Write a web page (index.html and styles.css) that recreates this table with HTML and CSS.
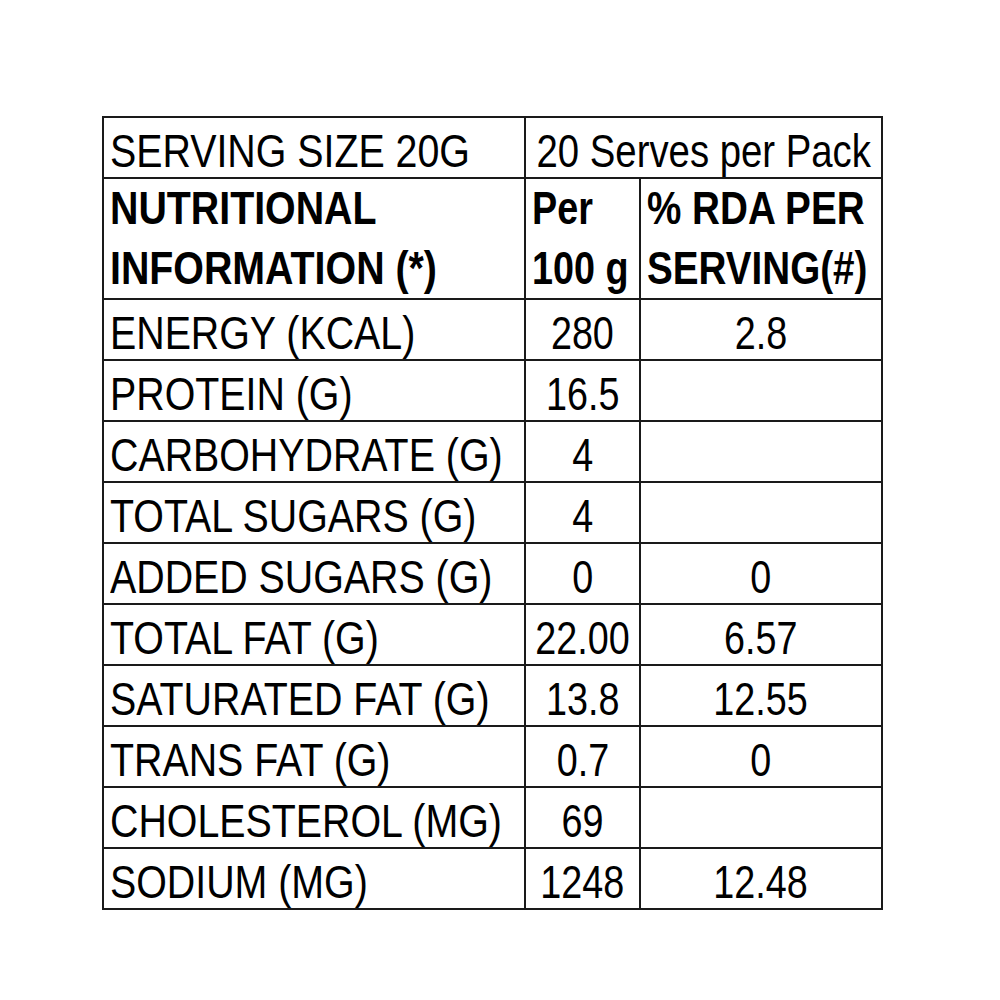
FILE: index.html
```html
<!DOCTYPE html>
<html lang="en">
<head>
<meta charset="utf-8">
<title>Nutritional Information</title>
<link rel="stylesheet" href="styles.css">
</head>
<body>
<div class="page">
  <table class="facts">
    <colgroup>
      <col class="c-name">
      <col class="c-per">
      <col class="c-rda">
    </colgroup>
    <tbody>
      <tr class="row">
        <td class="name"><span class="t">SERVING SIZE 20G</span></td>
        <td colspan="2"><div class="mid"><span class="t serves">20 Serves per Pack</span></div></td>
      </tr>
      <tr class="head">
        <td class="name"><span class="t bold">NUTRITIONAL<br>INFORMATION (*)</span></td>
        <td><span class="t bold num">Per<br>100 g</span></td>
        <td><span class="t bold rda">% RDA PER<br>SERVING(#)</span></td>
      </tr>
      <tr class="row"><td class="name"><span class="t">ENERGY (KCAL)</span></td><td><div class="mid"><span class="t num">280</span></div></td><td><div class="mid"><span class="t num">2.8</span></div></td></tr>
      <tr class="row"><td class="name"><span class="t">PROTEIN (G)</span></td><td><div class="mid"><span class="t num">16.5</span></div></td><td></td></tr>
      <tr class="row"><td class="name"><span class="t">CARBOHYDRATE (G)</span></td><td><div class="mid"><span class="t num">4</span></div></td><td></td></tr>
      <tr class="row"><td class="name"><span class="t">TOTAL SUGARS (G)</span></td><td><div class="mid"><span class="t num">4</span></div></td><td></td></tr>
      <tr class="row"><td class="name"><span class="t">ADDED SUGARS (G)</span></td><td><div class="mid"><span class="t num">0</span></div></td><td><div class="mid"><span class="t num">0</span></div></td></tr>
      <tr class="row"><td class="name"><span class="t">TOTAL FAT (G)</span></td><td><div class="mid"><span class="t num">22.00</span></div></td><td><div class="mid"><span class="t num">6.57</span></div></td></tr>
      <tr class="row"><td class="name"><span class="t">SATURATED FAT (G)</span></td><td><div class="mid"><span class="t num">13.8</span></div></td><td><div class="mid"><span class="t num">12.55</span></div></td></tr>
      <tr class="row"><td class="name"><span class="t">TRANS FAT (G)</span></td><td><div class="mid"><span class="t num">0.7</span></div></td><td><div class="mid"><span class="t num">0</span></div></td></tr>
      <tr class="row"><td class="name"><span class="t">CHOLESTEROL (MG)</span></td><td><div class="mid"><span class="t num">69</span></div></td><td></td></tr>
      <tr class="row"><td class="name"><span class="t">SODIUM (MG)</span></td><td><div class="mid"><span class="t num">1248</span></div></td><td><div class="mid"><span class="t num">12.48</span></div></td></tr>
    </tbody>
  </table>
</div>
</body>
</html>
```
FILE: styles.css
```css
html, body {
  margin: 0;
  padding: 0;
  background: #ffffff;
}

.page {
  padding: 116px 0 0 102px;
}

.facts {
  border-collapse: collapse;
  table-layout: fixed;
  width: 779px;
  font-family: "Liberation Sans", Arial, sans-serif;
  font-size: 46px;
  color: #000;
}

.c-name { width: 422px; }
.c-per { width: 115px; }
.c-rda { width: 242px; }

.facts td {
  border: 2px solid #1a1a1a;
  padding: 10px 0 0 6px;
  height: 49px;
  line-height: 46px;
  vertical-align: top;
  white-space: nowrap;
  overflow: visible;
}

.facts .head td {
  height: 119px;
  padding-top: 0;
  line-height: 59.5px;
}

.t {
  display: inline-block;
  transform: scaleX(0.855);
  transform-origin: 0 50%;
}

.t.num {
  transform: scaleX(0.82);
}

.t.serves {
  transform: scaleX(0.833);
}

.t.rda {
  transform: scaleX(0.84);
}

.mid {
  display: flex;
  justify-content: center;
  margin-left: -6px;
}

.mid .t {
  flex: none;
  transform-origin: 50% 50%;
}

.bold {
  font-weight: bold;
}
```
